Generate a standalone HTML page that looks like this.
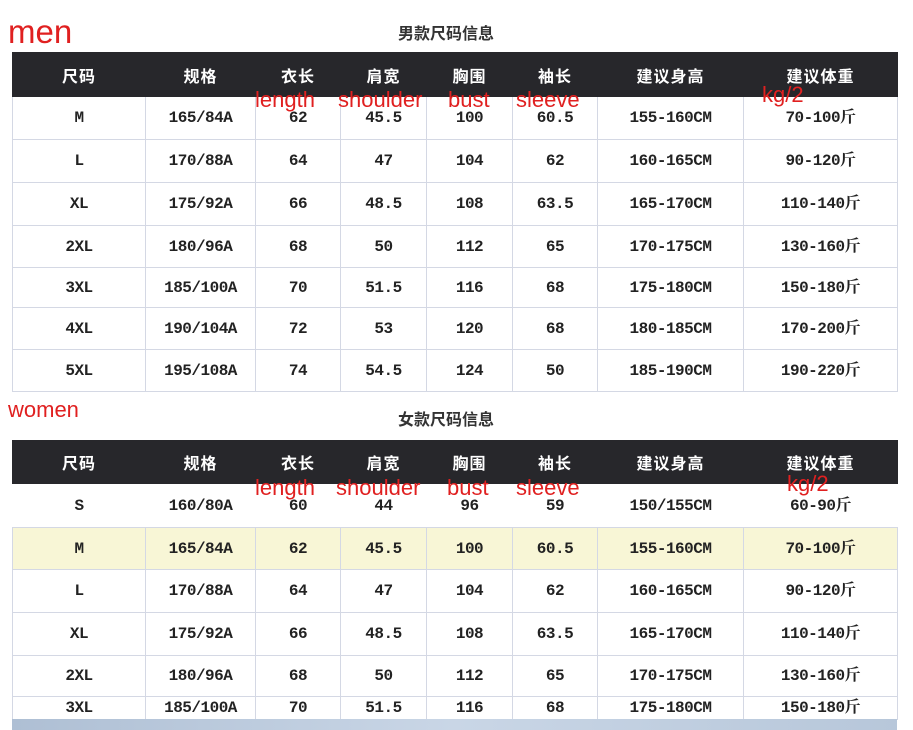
<!DOCTYPE html>
<html><head><meta charset="utf-8"><style>
html,body{margin:0;padding:0;background:#fff;width:913px;height:730px;overflow:hidden;position:relative;font-family:"Liberation Serif","Noto Serif CJK SC",serif}
.t{position:absolute;left:12px;border-collapse:collapse;table-layout:fixed}
.t td{border:1px solid #d4d8e4;text-align:center;font-weight:bold;font-size:16px;line-height:18px;color:#222;padding:0;font-family:"Liberation Mono","Noto Serif CJK SC",monospace;letter-spacing:-0.5px;vertical-align:middle;white-space:nowrap}
.t td span{font-family:"Noto Serif CJK SC",serif;font-size:16px;line-height:18px;display:inline-block;vertical-align:top;height:18px;position:relative;top:-2px}
.t tr.h td{background:#27272b;color:#fff;border-color:#27272b;font-family:"Noto Sans CJK SC",sans-serif;font-size:16px;letter-spacing:1px}
.title{position:absolute;font-family:"Noto Sans CJK SC",sans-serif;font-size:16px;font-weight:bold;color:#333}
.r{position:absolute;color:#e02020;font-family:"Liberation Sans","DejaVu Sans",sans-serif;font-size:22px;line-height:1}
.y td{background:#f8f6d6}
.nb td{border-left-color:#fff;border-right-color:#fff}
</style></head><body>
<div class="r" style="left:8px;top:15px;font-size:33px">men</div>
<div class="title" style="left:398px;top:20px">男款尺码信息</div>
<table class="t" style="top:52px">
<colgroup><col style="width:133px"><col style="width:110px"><col style="width:85px"><col style="width:86px"><col style="width:86px"><col style="width:85px"><col style="width:146px"><col style="width:154px"></colgroup>
<tr class="h" style="height:44px"><td>尺码</td><td>规格</td><td>衣长</td><td>肩宽</td><td>胸围</td><td>袖长</td><td>建议身高</td><td>建议体重</td></tr>
<tr style="height:43px"><td>M</td><td>165/84A</td><td>62</td><td>45.5</td><td>100</td><td>60.5</td><td>155-160CM</td><td>70-100<span>斤</span></td></tr>
<tr style="height:43px"><td>L</td><td>170/88A</td><td>64</td><td>47</td><td>104</td><td>62</td><td>160-165CM</td><td>90-120<span>斤</span></td></tr>
<tr style="height:43px"><td>XL</td><td>175/92A</td><td>66</td><td>48.5</td><td>108</td><td>63.5</td><td>165-170CM</td><td>110-140<span>斤</span></td></tr>
<tr style="height:42px"><td>2XL</td><td>180/96A</td><td>68</td><td>50</td><td>112</td><td>65</td><td>170-175CM</td><td>130-160<span>斤</span></td></tr>
<tr style="height:40px"><td>3XL</td><td>185/100A</td><td>70</td><td>51.5</td><td>116</td><td>68</td><td>175-180CM</td><td>150-180<span>斤</span></td></tr>
<tr style="height:42px"><td>4XL</td><td>190/104A</td><td>72</td><td>53</td><td>120</td><td>68</td><td>180-185CM</td><td>170-200<span>斤</span></td></tr>
<tr style="height:42px"><td>5XL</td><td>195/108A</td><td>74</td><td>54.5</td><td>124</td><td>50</td><td>185-190CM</td><td>190-220<span>斤</span></td></tr>
</table>
<div class="r" style="left:255px;top:89px">length</div>
<div class="r" style="left:338px;top:89px">shoulder</div>
<div class="r" style="left:448px;top:89px">bust</div>
<div class="r" style="left:516px;top:89px">sleeve</div>
<div class="r" style="left:762px;top:84px">kg/2</div>

<div class="r" style="left:8px;top:399px">women</div>
<div class="title" style="left:398px;top:406px">女款尺码信息</div>
<table class="t" style="top:440px">
<colgroup><col style="width:133px"><col style="width:110px"><col style="width:85px"><col style="width:86px"><col style="width:86px"><col style="width:85px"><col style="width:146px"><col style="width:154px"></colgroup>
<tr class="h" style="height:43px"><td>尺码</td><td>规格</td><td>衣长</td><td>肩宽</td><td>胸围</td><td>袖长</td><td>建议身高</td><td>建议体重</td></tr>
<tr class="nb" style="height:44px"><td>S</td><td>160/80A</td><td>60</td><td>44</td><td>96</td><td>59</td><td>150/155CM</td><td>60-90<span>斤</span></td></tr>
<tr class="y" style="height:42px"><td>M</td><td>165/84A</td><td>62</td><td>45.5</td><td>100</td><td>60.5</td><td>155-160CM</td><td>70-100<span>斤</span></td></tr>
<tr style="height:43px"><td>L</td><td>170/88A</td><td>64</td><td>47</td><td>104</td><td>62</td><td>160-165CM</td><td>90-120<span>斤</span></td></tr>
<tr style="height:43px"><td>XL</td><td>175/92A</td><td>66</td><td>48.5</td><td>108</td><td>63.5</td><td>165-170CM</td><td>110-140<span>斤</span></td></tr>
<tr style="height:41px"><td>2XL</td><td>180/96A</td><td>68</td><td>50</td><td>112</td><td>65</td><td>170-175CM</td><td>130-160<span>斤</span></td></tr>
<tr style="height:23px"><td>3XL</td><td>185/100A</td><td>70</td><td>51.5</td><td>116</td><td>68</td><td>175-180CM</td><td>150-180<span>斤</span></td></tr>
</table>
<div class="r" style="left:255px;top:477px">length</div>
<div class="r" style="left:336px;top:477px">shoulder</div>
<div class="r" style="left:447px;top:477px">bust</div>
<div class="r" style="left:516px;top:477px">sleeve</div>
<div class="r" style="left:787px;top:473px">kg/2</div>
<div style="position:absolute;left:12px;top:719px;width:885px;height:11px;background:linear-gradient(90deg,#aebfd4,#c9d6e6,#b7c7da)"></div>
</body></html>
